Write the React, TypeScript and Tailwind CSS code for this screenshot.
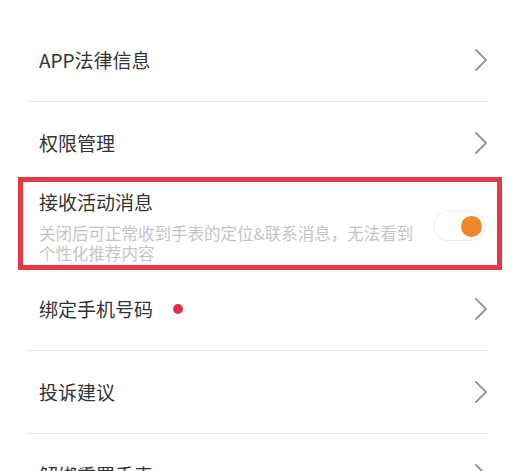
import React from "react";

const font = { fontFamily: '"Noto Sans CJK SC", "Noto Sans", sans-serif' };

function Chevron() {
  return (
    <svg width="14" height="24" viewBox="0 0 14 24" className="shrink-0">
      <path d="M2 2 L12 12 L2 22" fill="none" stroke="#9a9a9a" strokeWidth="2" strokeLinecap="round" strokeLinejoin="round" />
    </svg>
  );
}

function Row({ label, dot }: { label: string; dot?: boolean }) {
  return (
    <div className="h-[82px] flex items-center justify-between pl-[13px] pr-[1px]">
      <div className="flex items-center">
        <span className="text-[19px] leading-[26px] text-[#333333]">{label}</span>
        {dot && <span className="ml-[20px] w-[10px] h-[10px] rounded-full bg-[#dc3348]" />}
      </div>
      <Chevron />
    </div>
  );
}

function Divider() {
  return <div className="h-px bg-[#e6e6e6]" />;
}

export default function App() {
  return (
    <div className="relative w-[518px] h-[471px] bg-white overflow-hidden" style={font}>
      <div className="pt-[19px] pl-[26px] pr-[29px]">
        <Row label="APP法律信息" />
        <Divider />
        <Row label="权限管理" />
        <div className="h-[84px] flex items-center pl-[13px] pr-[3px] gap-[12px]">
          <div className="flex-1 pt-[5px] pb-[5px]">
            <div className="text-[19px] leading-[26px] text-[#333333]">接收活动消息</div>
            <div className="mt-[8px] text-[16.5px] leading-[20px] text-[#c4c4c4]">
              关闭后可正常收到手表的定位&amp;联系消息，无法看到个性化推荐内容
            </div>
          </div>
          <div className="w-[53px] h-[30px] rounded-full border border-[#ebebeb] bg-white flex items-center justify-end pr-[3px] shrink-0">
            <div className="w-[21px] h-[21px] rounded-full bg-[#f0862a]" />
          </div>
        </div>
        <Row label="绑定手机号码" dot />
        <Divider />
        <Row label="投诉建议" />
        <Divider />
        <Row label="解绑重置手表" />
      </div>
      <div className="absolute left-[18px] top-[177px] w-[484px] h-[93px] border-[5px] border-[#e33a46] pointer-events-none" />
    </div>
  );
}
